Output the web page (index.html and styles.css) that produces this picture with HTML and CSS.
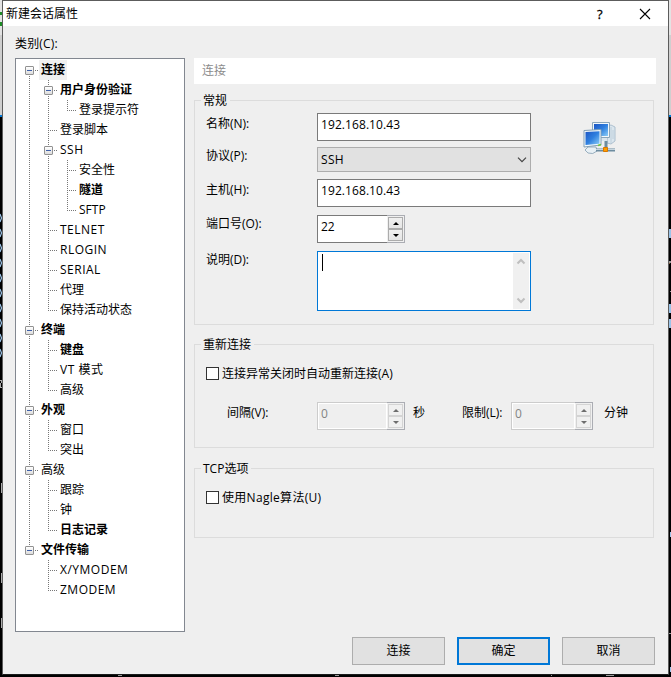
FILE: index.html
```html
<!DOCTYPE html>
<html lang="zh-CN">
<head>
<meta charset="utf-8">
<title>新建会话属性</title>
<link rel="stylesheet" href="styles.css">
</head>
<body>
<svg class="backdrop" width="671" height="677" viewBox="0 0 671 677" shape-rendering="crispEdges">
  <path fill="#000" d="M0 0h671v677H0z"/>
  <path fill="#e3e3e3" d="M0 0h671v35H0z"/><path fill="#cfcfcf" d="M0 35h671v80H0z"/>
  <path fill="#0078d7" d="M0 115h671v2H0z"/>
  <path fill="#1c8c25" d="M0 12h3v3H0zM0 22h3v4H0z"/>
  <g stroke="#9cc4e8" stroke-width="1.200" fill="none" shape-rendering="auto">
    <path id="w" d="M0 214l1.500 4-1.500 4"/>
    <use href="#w" y="15"/><use href="#w" y="30"/><use href="#w" y="45"/><use href="#w" y="60"/><use href="#w" y="75"/><use href="#w" y="90"/><use href="#w" y="105"/><use href="#w" y="120"/><use href="#w" y="135"/>
  </g>
  <path stroke="#aaa" fill="none" d="M0 380h2l-2 7h2M1.500 483v10M1.500 573v10M1.500 618v10"/>
  <path fill="#9cc4e8" d="M669 229h2v9h-2zM669 304h2v9h-2zM669 319h2v9h-2zM670 532h1v5h-1zM670 667h1v5h-1z"/>
  <path fill="#8a5a35" d="M668 262h2v2h-2zM668 293h1v4h-1z"/>
  <path fill="#999" d="M669 261h2v2h-2zM670 291h1v1h-1zM669 633h2v1h-2zM118 675h4v1h-4zM335 675h4v1h-4zM551 675h1v1h-1zM606 675h8v1h-8z"/>
</svg>
<div class="dialog">
  <header class="titlebar">
    <h1>新建会话属性</h1>
    <span class="help">?</span>
    <svg class="close" width="12" height="12" viewBox="0 0 12 12"><path d="M1 1l10 10M11 1L1 11" stroke="#000" stroke-width="1.100"/></svg>
  </header>
  <div class="content">
    <section class="side">
      <div class="caption">类别(C):</div>
      <div class="tree">
        <div class="row"><i class="g start"><b></b></i><span class="bold current">连接</span></div>
        <div class="row"><i class="g line"></i><i class="g tee"><b></b></i><span class="bold">用户身份验证</span></div>
        <div class="row"><i class="g line"></i><i class="g line"></i><i class="g end"></i><span>登录提示符</span></div>
        <div class="row"><i class="g line"></i><i class="g tee"></i><span>登录脚本</span></div>
        <div class="row"><i class="g line"></i><i class="g tee"><b></b></i><span class="latin">SSH</span></div>
        <div class="row"><i class="g line"></i><i class="g line"></i><i class="g tee"></i><span>安全性</span></div>
        <div class="row"><i class="g line"></i><i class="g line"></i><i class="g tee"></i><span class="bold">隧道</span></div>
        <div class="row"><i class="g line"></i><i class="g line"></i><i class="g end"></i><span>SFTP</span></div>
        <div class="row"><i class="g line"></i><i class="g tee"></i><span class="latin">TELNET</span></div>
        <div class="row"><i class="g line"></i><i class="g tee"></i><span class="latin">RLOGIN</span></div>
        <div class="row"><i class="g line"></i><i class="g tee"></i><span class="latin">SERIAL</span></div>
        <div class="row"><i class="g line"></i><i class="g tee"></i><span>代理</span></div>
        <div class="row"><i class="g line"></i><i class="g end"></i><span>保持活动状态</span></div>
        <div class="row"><i class="g tee"><b></b></i><span class="bold">终端</span></div>
        <div class="row"><i class="g line"></i><i class="g tee"></i><span class="bold">键盘</span></div>
        <div class="row"><i class="g line"></i><i class="g tee"></i><span class="latin">VT 模式</span></div>
        <div class="row"><i class="g line"></i><i class="g end"></i><span>高级</span></div>
        <div class="row"><i class="g tee"><b></b></i><span class="bold">外观</span></div>
        <div class="row"><i class="g line"></i><i class="g tee"></i><span>窗口</span></div>
        <div class="row"><i class="g line"></i><i class="g end"></i><span>突出</span></div>
        <div class="row"><i class="g tee"><b></b></i><span>高级</span></div>
        <div class="row"><i class="g line"></i><i class="g tee"></i><span>跟踪</span></div>
        <div class="row"><i class="g line"></i><i class="g tee"></i><span>钟</span></div>
        <div class="row"><i class="g line"></i><i class="g end"></i><span class="bold">日志记录</span></div>
        <div class="row"><i class="g end"><b></b></i><span class="bold">文件传输</span></div>
        <div class="row"><i class="g"></i><i class="g tee"></i><span class="latin">X/YMODEM</span></div>
        <div class="row"><i class="g"></i><i class="g end"></i><span class="latin">ZMODEM</span></div>
      </div>
    </section>
    <main class="panel">
      <div class="banner">连接</div>
      <section class="group general">
        <h2>常规</h2>
        <div class="fields">
          <label>名称(N):</label><div class="input">192.168.10.43</div>
          <label>协议(P):</label><div class="input select">SSH<svg width="10" height="6" viewBox="0 0 10 6"><path d="M1 .7l4 4 4-4" fill="none" stroke="#444" stroke-width="1.200"/></svg></div>
          <label>主机(H):</label><div class="input">192.168.10.43</div>
          <label>端口号(O):</label>
          <div class="spin"><div class="value">22</div><div class="arrows"><i class="up"></i><i class="down"></i></div></div>
          <label>说明(D):</label>
          <div class="area"><i class="caret"></i><div class="scroll">
            <svg width="10" height="7" viewBox="0 0 10 7"><path d="M1.500 5.500L5 2l3.500 3.500"/></svg>
            <svg width="10" height="7" viewBox="0 0 10 7"><path d="M1.500 1.500L5 5l3.500-3.500"/></svg>
          </div></div>
        </div>
        <svg class="computers" width="33" height="33" viewBox="0 0 33 33">
          <defs><linearGradient id="screen" x1="0" y1="0" x2="1" y2="1"><stop offset="0" stop-color="#1c55c4"/><stop offset=".5" stop-color="#2f80df"/><stop offset="1" stop-color="#8ccdf8"/></linearGradient></defs>
          <path d="M25 4l3-1 4 2v14l-4 3-4-1z" fill="#dbe6ee" stroke="#9fb5c6" stroke-width=".8"/>
          <path d="M28 5v16M30 8v9" stroke="#b7c9d6" stroke-width=".8"/>
          <path d="M9.500.5h17v15h-17z" fill="#f3f8fb" stroke="#8ba6ba"/>
          <path d="M11 2h14v12H11z" fill="url(#screen)"/>
          <path d="M18 16h5l1 3h-6z" fill="#dbe6ee"/>
          <path d="M1 8.500l17-1v15.500l-17 2z" fill="#f5fafc" stroke="#829fb5"/>
          <path d="M2.500 10l14-.8v12.600L2.500 23z" fill="url(#screen)"/>
          <path d="M5 25h8l1 4q-4 4-9 2l-3-3z" fill="#e8f0f5" stroke="#8fa6b8" stroke-width=".9"/>
          <path d="M13 28h19M23 19v8" stroke="#6d8ca0" stroke-width="3"/>
          <path d="M13 27.500h19" stroke="#c6d5de" stroke-width="1"/>
          <path d="M20.500 25.500h4v4h-4z" fill="#ff9c00" stroke="#d77700"/>
          <path d="M15 23.500l3-1" stroke="#70c83c" stroke-width="1.500"/>
        </svg>
      </section>
      <section class="group reconnect">
        <h2>重新连接</h2>
        <div class="check"><i></i>连接异常关闭时自动重新连接(A)</div>
        <div class="limits">
          <label class="interval">间隔(V):</label>
          <div class="spin off"><div class="value">0</div><div class="arrows"><i class="up"></i><i class="down"></i></div></div>
          <span class="seconds">秒</span>
          <label class="limit">限制(L):</label>
          <div class="spin off short"><div class="value">0</div><div class="arrows"><i class="up"></i><i class="down"></i></div></div>
          <span class="minutes">分钟</span>
        </div>
      </section>
      <section class="group tcp">
        <h2>TCP选项</h2>
        <div class="check nagle"><i></i>使用Nagle算法(U)</div>
      </section>
      <footer class="buttons"><div class="button">连接</div><div class="button primary">确定</div><div class="button">取消</div></footer>
    </main>
  </div>
</div>
</body>
</html>
```

FILE: styles.css
```css
* { box-sizing: border-box; }
body {
  margin: 0; width: 671px; height: 677px; overflow: hidden; position: relative;
  font: 12px/16px "Open Sans", "Noto Sans CJK SC", sans-serif; color: #000;
}
i { font-style: normal; }
svg { display: block; }
.backdrop { position: absolute; inset: 0; }
.dialog {
  position: relative; margin-left: 2px; width: 667px; height: 675px;
  border: 1px solid #5c5c5c; border-bottom-color: #1a1a1a; background: #efefef;
}
.titlebar { height: 25px; background: #fff; display: flex; align-items: center; padding: 0 17px 0 3px; }
.titlebar h1 { margin: 0; font-size: 12px; font-weight: 400; flex: 1; line-height: 24px; }
.help { font-size: 13px; width: 42px; line-height: 24px; -webkit-text-stroke: .3px #000; }
.content { display: flex; padding: 0 12px; height: 648px; }
.side { width: 170px; padding-top: 10px; }
.caption { height: 22px; line-height: 16px; letter-spacing: .15px; }
.tree { height: 574px; border: 1px solid #828790; background: #fff; padding: 1px 0 0 4px; }
.row { display: flex; height: 20px; line-height: 20px; white-space: nowrap; }
.row span { padding: 0 2px; }
.row .latin { letter-spacing: .5px; }
.bold { font-weight: 700; }
.current { background: #f0f0f0; }

/* Guide cells draw the dotted branches of the tree */
.g {
  --v: repeating-linear-gradient(to bottom, #777 0 1px, transparent 1px 2px);
  --h: repeating-linear-gradient(to right, #777 0 1px, transparent 1px 2px);
  width: 19px; height: 20px; flex: none; padding: 6px 0 0 5px; background-repeat: no-repeat;
}
.line { background-image: var(--v); background-size: 1px 20px; background-position: 9px 0; }
.tee { background-image: var(--v), var(--h); background-size: 1px 20px, 9px 1px; background-position: 9px 0, 9px 10px; }
.end { background-image: var(--v), var(--h); background-size: 1px 11px, 9px 1px; background-position: 9px 0, 9px 10px; }
.start { background-image: var(--v), var(--h); background-size: 1px 10px, 9px 1px; background-position: 9px 10px, 9px 10px; }
.g b {
  display: block; width: 9px; height: 9px; border: 1px solid #919191; border-radius: 1px;
  background: linear-gradient(#3e5fa8, #3e5fa8) 1px 3px / 5px 1px no-repeat, linear-gradient(#fff, #dcdcdc);
}

.panel { margin-left: 9px; width: 462px; padding-top: 32px; }
.banner { height: 26px; padding-left: 8px; line-height: 26px; background: #fff; color: #8c8c8c; }
.group { width: 460px; border: 1px solid #dcdcdc; padding-left: 11px; }
.group h2 {
  display: table; height: 16px; margin: -8px 0 0 -5px; padding: 0 3px 0 2px;
  font-size: 12px; font-weight: 400; line-height: 16px; background: #efefef;
}
.general { display: grid; grid-template-columns: 377px 40px; margin-top: 16px; height: 225px; align-content: start; }
.general h2 { grid-column: 1 / 3; width: max-content; }
.fields { display: grid; grid-template-columns: 111px 214px; grid-template-rows: 34px 32px 36px 36px 60px; margin-top: 4px; }
.fields label { padding-top: 3px; line-height: 16px; }
.fields label:nth-of-type(n+4) { padding-top: 1px; }
.fields label:nth-of-type(2) { padding-top: 1px; }
.input { height: 28px; border: 1px solid #7a7a7a; background: #fff; padding-left: 3px; line-height: 22px; letter-spacing: .08px; }
.select { height: 25px; border-color: #adadad; background: #e1e1e1; display: flex; align-items: center; justify-content: space-between; padding-right: 3px; line-height: 25px; letter-spacing: .3px; }
.spin { width: 88px; height: 28px; display: flex; }
.value { flex: 1; border: 1px solid #7a7a7a; border-right: 0; background: #fff; padding-left: 3px; line-height: 22px; }
.arrows { width: 18px; border: 1px solid #abadb3; border-left: 0; background: #f0f0f0; padding: 1px; display: flex; flex-direction: column; }
.arrows i { flex: 1; border: 1px solid #acacac; background: linear-gradient(#f0f0f0, #e5e5e5); display: flex; align-items: center; justify-content: center; }
.arrows i::before { content: ""; border: 3px solid transparent; }
.arrows .up::before { border-top: 0; border-bottom-color: #000; }
.arrows .down::before { border-bottom: 0; border-top-color: #000; }
.area { height: 60px; border: 1px solid #0078d7; background: #fff; display: flex; justify-content: space-between; padding: 1px 1px 1px 4px; }
.caret { width: 1px; height: 17px; margin-top: 1px; background: #000; }
.scroll { width: 16px; background: #f0f0f0; display: flex; flex-direction: column; justify-content: space-between; padding: 5px 3px; }
.scroll path { fill: none; stroke: #bfbfbf; stroke-width: 2; }
.computers { margin-top: 13px; }
.reconnect { margin-top: 19px; height: 104px; }
.check { display: flex; align-items: center; gap: 3px; height: 16px; margin-top: 13px; white-space: nowrap; }
.check i { width: 13px; height: 13px; margin-top: -1px; border: 1px solid #333; background: #fff; }
.nagle { letter-spacing: .3px; }
.limits { display: flex; margin-top: 20px; line-height: 22px; }
.interval { width: 90px; margin-left: 21px; }
.seconds { width: 49px; padding-left: 8px; }
.limit { width: 57px; padding-left: 8px; }
.minutes { padding-left: 11px; }
.short { width: 82px; }
.off .value { border-color: #ccc; background: #efefef; color: #838383; box-shadow: inset 0 0 0 1px #fff; }
.off .arrows i { border-color: #d4d4d4; background: #f0f0f0; }
.off .up::before { border-bottom-color: #6d6d6d; }
.off .down::before { border-top-color: #6d6d6d; }
.tcp { margin-top: 20px; height: 70px; }
.buttons { display: flex; gap: 12px; margin: 99px 0 0 158px; }
.button { width: 93px; height: 28px; border: 1px solid #adadad; background: #e1e1e1; text-align: center; line-height: 25px; }
.primary { border: 2px solid #0078d7; line-height: 23px; }
```
